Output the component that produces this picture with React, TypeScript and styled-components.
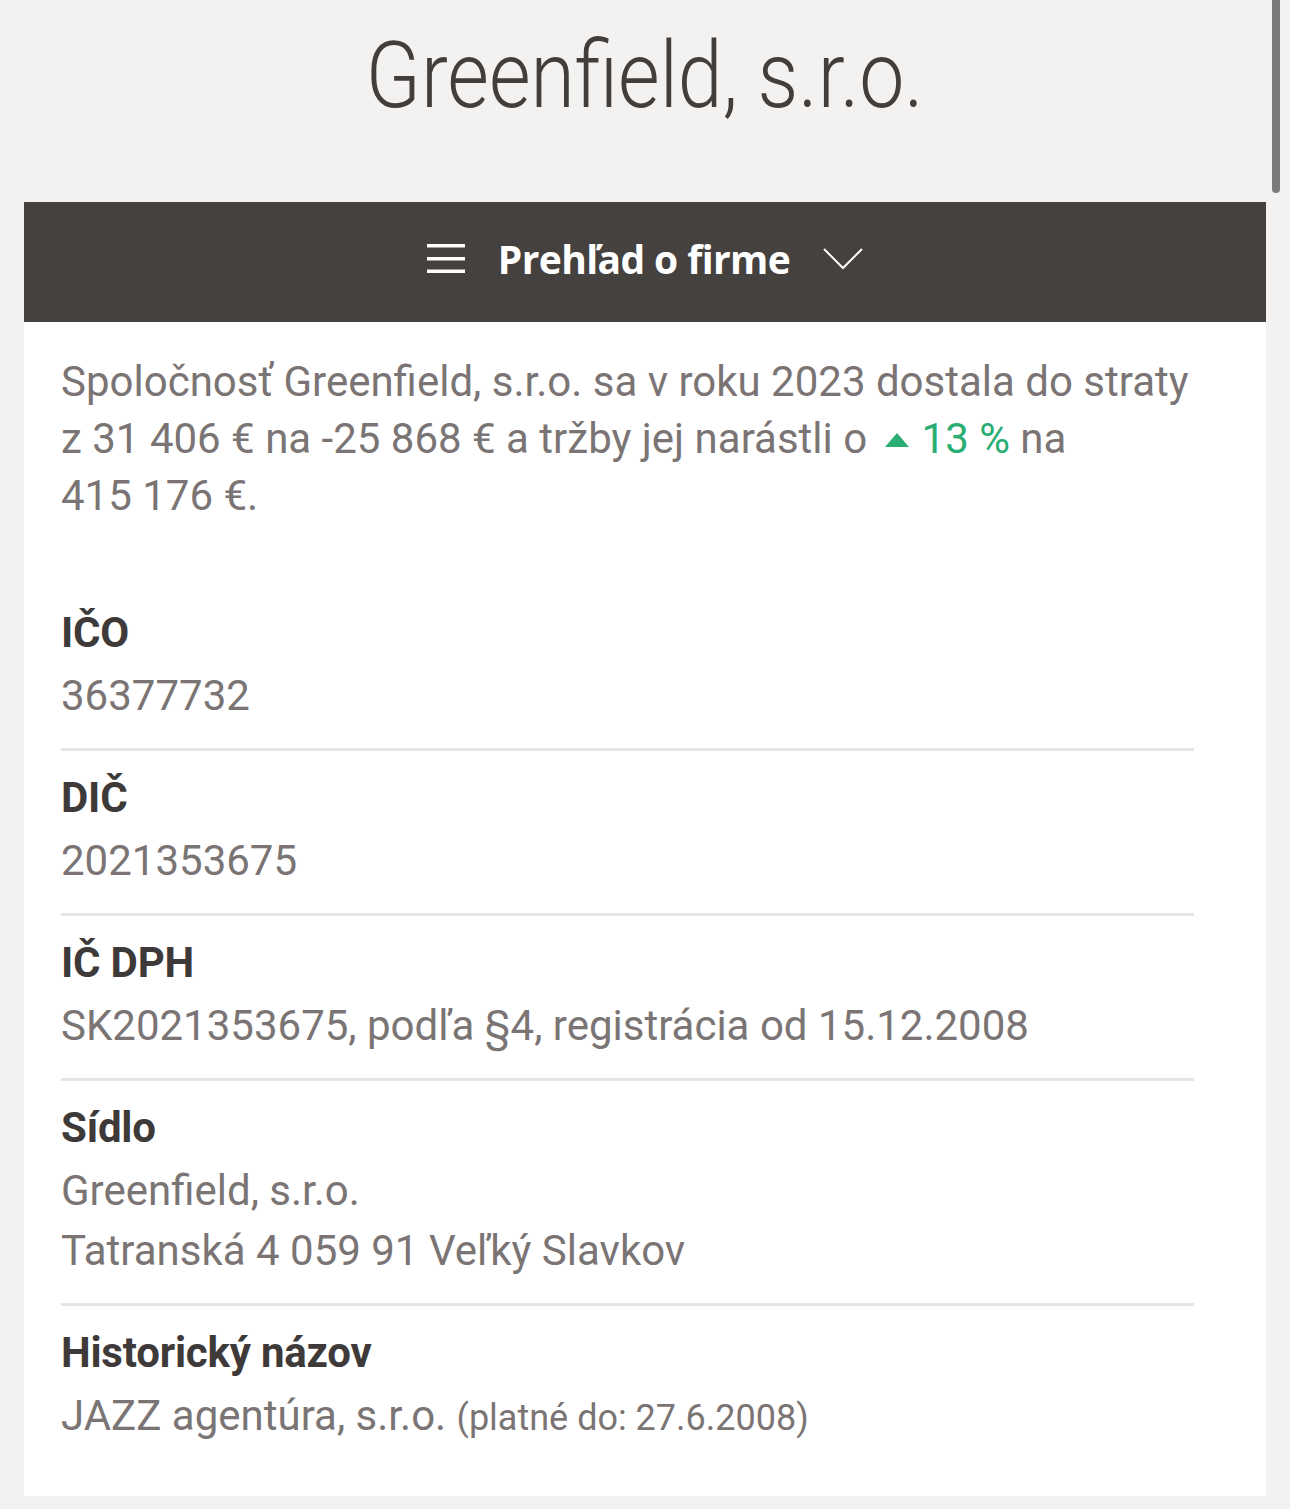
import React from 'react';
import styled, { createGlobalStyle } from 'styled-components';

const GlobalStyle = createGlobalStyle`
  html, body {
    margin: 0;
    padding: 0;
    background: #f3f2f0;
  }
  body {
    font-family: Roboto, "Noto Sans", sans-serif;
    -webkit-font-smoothing: antialiased;
  }
`;

const Page = styled.div`
  min-height: 1509px;
  padding: 0 24px 12px;
  box-sizing: border-box;
`;

const ScrollThumb = styled.div`
  position: fixed;
  top: 0;
  right: 10px;
  width: 8px;
  height: 193px;
  background: #7b7b7b;
  border-radius: 0 0 4px 4px;
`;

const TitleBar = styled.header`
  height: 202px;
  padding-top: 21px;
  box-sizing: border-box;
  text-align: center;
`;

const Title = styled.h1`
  display: inline-block;
  margin: 0;
  font-family: Roboto, sans-serif;
  font-weight: 300;
  font-size: 92px;
  line-height: 110px;
  color: #423e3c;
  transform: scaleX(0.875);
`;

const SectionBar = styled.button`
  display: flex;
  align-items: center;
  justify-content: center;
  gap: 33px;
  width: 100%;
  height: 120px;
  border: 0;
  padding: 0 0 7px;
  background: #45413f;
  color: #fff;
  cursor: pointer;
`;

const SectionTitle = styled.span`
  font-family: "Open Sans", sans-serif;
  font-weight: 700;
  font-size: 39px;
  letter-spacing: -0.6px;
`;

const Card = styled.section`
  background: #fff;
  padding: 31px 72px 48px 37px;
`;

const Summary = styled.p`
  margin: 0 0 62px;
  font-size: 42px;
  line-height: 57px;
  color: #7a7574;
`;

const Growth = styled.span`
  color: #2aae74;
  white-space: nowrap;
  margin-left: 7px;
`;

const Row = styled.div<{ $last?: boolean }>`
  padding: 14px 0 ${({ $last }) => ($last ? '0' : '22px')};
  border-bottom: ${({ $last }) => ($last ? 'none' : '3px solid #e6e5e3')};
`;

const Label = styled.div`
  font-size: 42px;
  font-weight: 700;
  line-height: 66px;
  color: #3e3a39;
  letter-spacing: -0.2px;
`;

const Value = styled.div`
  font-size: 42px;
  line-height: 60px;
  color: #7a7574;
`;

const Note = styled.span`
  font-size: 36px;
`;

const Hamburger = () => (
  <svg width="38" height="30" viewBox="0 0 38 30">
    <rect x="0" y="0" width="38" height="3.5" fill="#fff" />
    <rect x="0" y="13" width="38" height="3.5" fill="#fff" />
    <rect x="0" y="25.5" width="38" height="3.5" fill="#fff" />
  </svg>
);

const Chevron = () => (
  <svg width="40" height="22" viewBox="0 0 40 22">
    <polyline points="1,1 20,20 39,1" fill="none" stroke="#fff" strokeWidth="2" />
  </svg>
);

const UpTriangle = () => (
  <svg width="24" height="14" viewBox="0 0 24 14" style={{ marginRight: 13, verticalAlign: '6px' }}>
    <polygon points="12,0 24,14 0,14" fill="#2aae74" />
  </svg>
);

export default function App() {
  return (
    <>
      <GlobalStyle />
      <ScrollThumb />
      <Page>
        <TitleBar>
          <Title>Greenfield, s.r.o.</Title>
        </TitleBar>
        <SectionBar>
          <Hamburger />
          <SectionTitle>Prehľad o firme</SectionTitle>
          <Chevron />
        </SectionBar>
        <Card>
          <Summary>
            Spoločnosť Greenfield, s.r.o. sa v roku 2023 dostala do straty z 31&nbsp;406&nbsp;€ na -25&nbsp;868&nbsp;€
            a tržby jej narástli o{' '}
            <Growth>
              <UpTriangle />
              13&nbsp;%
            </Growth>{' '}
            na 415&nbsp;176&nbsp;€.
          </Summary>
          <Row>
            <Label>IČO</Label>
            <Value>36377732</Value>
          </Row>
          <Row>
            <Label>DIČ</Label>
            <Value>2021353675</Value>
          </Row>
          <Row>
            <Label>IČ DPH</Label>
            <Value>SK2021353675, podľa §4, registrácia od 15.12.2008</Value>
          </Row>
          <Row>
            <Label>Sídlo</Label>
            <Value>
              Greenfield, s.r.o.
              <br />
              Tatranská 4 059 91 Veľký Slavkov
            </Value>
          </Row>
          <Row $last>
            <Label>Historický názov</Label>
            <Value>
              JAZZ agentúra, s.r.o. <Note>(platné do: 27.6.2008)</Note>
            </Value>
          </Row>
        </Card>
      </Page>
    </>
  );
}
